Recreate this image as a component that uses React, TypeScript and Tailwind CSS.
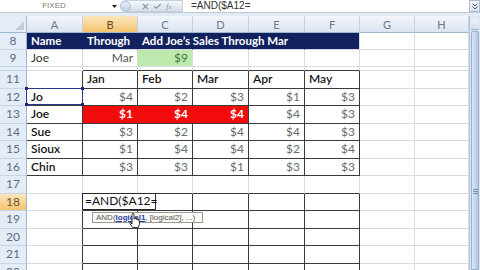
import React from 'react';
import { X, Check } from 'lucide-react';

type Cell = { t?: string; c?: string; r?: string; b?: string; x?: React.ReactNode };
type Row = { label: string; h: string; cells: Cell[]; hl?: boolean };

const WCLS = ['w-[56px]', 'w-[55px]', 'w-[55px]', 'w-[56px]', 'w-[56px]', 'w-[55px]', 'w-[55px]', 'w-[54px]'];
const LETTERS = ['A', 'B', 'C', 'D', 'E', 'F', 'G', 'H'];

const navy = 'bg-[#10215e] text-white font-bold text-[11.5px]';
const navyR = 'border-r-[#10215e]';
const val = 'justify-end text-[#6b6b6b]';
const label = 'text-[#151515] font-semibold';
const red = 'justify-end bg-[#f20c0c] text-white font-bold';
const DR = 'border-r-[#3a3a3a]';
const DB = 'border-b-[#3a3a3a]';

const months = ['Jan', 'Feb', 'Mar', 'Apr', 'May'];
const sales: [string, number[]][] = [
  ['Jo', [4, 2, 3, 1, 3]],
  ['Joe', [1, 4, 4, 4, 3]],
  ['Sue', [3, 2, 4, 4, 3]],
  ['Sioux', [1, 4, 4, 2, 4]],
  ['Chin', [3, 3, 1, 3, 3]],
];

const Selection = () => (
  <div className="absolute -top-px -left-px -right-px bottom-0 border border-[#2b3790] pointer-events-none">
    <div className="absolute -top-[2px] -left-[2px] w-[3px] h-[3px] bg-[#1c2670]" />
    <div className="absolute -top-[2px] -right-[2px] w-[3px] h-[3px] bg-[#1c2670]" />
    <div className="absolute -bottom-[2px] -right-[2px] w-[3px] h-[3px] bg-[#1c2670]" />
    <div className="absolute -bottom-[2px] -left-[2px] w-[3px] h-[3px] bg-[#1c2670]" />
  </div>
);

const EditBox = () => (
  <div className="absolute -top-px -left-px w-[74px] bottom-0 border border-[#2a2a2a] bg-white flex items-center pl-[2px] text-[12px] text-[#111]">
    =AND($A12=
  </div>
);

const Tooltip = () => (
  <>
    <div className="absolute top-[1px] left-[9px] w-[111px] h-[11px] border border-[#9a9a9a] bg-[#fbfbf6] flex items-center pl-[3px] text-[8px] text-[#555] font-['Liberation_Sans',sans-serif] whitespace-nowrap">
      AND(<span className="font-bold text-[#2a3a9a] underline">logical1</span>, [logical2], ...)
    </div>
    <svg className="absolute top-[2px] left-[46px]" width="11" height="15" viewBox="0 0 11 15">
      <path
        d="M3 1.2 Q3 0.5 4 0.5 Q5 0.5 5 1.2 V6 H5.6 V5.6 Q6.6 5 7.4 5.6 V6.4 Q8.2 5.9 9 6.4 V7.2 Q9.8 6.9 10.4 7.5 V11 L9.4 14.4 H3.6 L0.9 10.6 Q0.6 9.6 1.6 9.6 L3 11 Z"
        fill="white"
        stroke="black"
        strokeWidth="0.8"
      />
    </svg>
  </>
);

const boxRow = (n: string, extraB?: React.ReactNode): Row => ({
  label: n,
  h: 'h-[17.5px]',
  hl: n === '18',
  cells: [
    { r: DR },
    { r: DR, b: DB, x: extraB },
    { r: DR, b: DB },
    { r: DR, b: DB },
    { r: DR, b: DB },
    { r: DR, b: DB },
    {},
    {},
  ],
});

const rows: Row[] = [
  {
    label: '8',
    h: 'h-[17px]',
    cells: [
      { t: 'Name', c: navy, r: navyR },
      { t: 'Through', c: navy, r: navyR },
      { x: <span className="relative z-10">Add Joe&rsquo;s Sales Through Mar</span>, c: navy, r: navyR },
      { c: navy, r: navyR },
      { c: navy, r: navyR },
      { c: navy },
      {},
      {},
    ],
  },
  {
    label: '9',
    h: 'h-[17px]',
    cells: [
      { t: 'Joe', c: 'text-[#333]' },
      { t: 'Mar', c: 'justify-end text-[#555]' },
      { t: '$9', c: 'justify-end bg-[#bfe8ae] text-[#3f7a2f]' },
      {},
      {},
      {},
      {},
      {},
    ],
  },
  {
    label: '',
    h: 'h-[4px]',
    cells: [{}, { b: DB }, { b: DB }, { b: DB }, { b: DB }, { b: DB }, {}, {}],
  },
  {
    label: '11',
    h: 'h-[17.5px]',
    cells: [{ r: DR, b: DB }, ...months.map((m) => ({ t: m, c: label, r: DR, b: DB })), {}, {}],
  },
  ...sales.map(([n, vals]): Row => ({
    label: String(12 + sales.findIndex((s) => s[0] === n)),
    h: 'h-[17.5px]',
    cells: [
      { t: n, c: label + ' relative', r: DR, b: DB, x: n === 'Jo' ? <Selection /> : null },
      ...vals.map((v, i) => {
        const hot = n === 'Joe' && i < 3;
        return { t: '$' + v, c: hot ? red : val, r: hot && i < 2 ? 'border-r-[#f20c0c]' : DR, b: DB };
      }),
      {},
      {},
    ],
  })),
  {
    label: '17',
    h: 'h-[17.5px]',
    cells: [{}, { b: DB }, { b: DB }, { b: DB }, { b: DB }, { b: DB }, {}, {}],
  },
  boxRow('18', <EditBox />),
  boxRow('19', <Tooltip />),
  boxRow('20'),
  boxRow('21'),
  boxRow('22'),
];

const ColHeader = ({ l, i }: { l: string; i: number }) => (
  <div
    className={`${WCLS[i]} shrink-0 flex items-center justify-center border-r border-b border-r-[#c5d2e3] border-b-[#9eb6ce] bg-linear-to-b text-[11px] ${
      l === 'B' ? 'from-[#fbe6bb] to-[#f4c56c] text-[#5a4a2a]' : 'from-[#f2f6fb] to-[#dbe4f1] text-[#6a7890]'
    }`}
  >
    {l}
  </div>
);

export default function App() {
  return (
    <div className="w-[480px] h-[270px] overflow-hidden bg-white font-[Lato,sans-serif] text-[12px] leading-none select-none">
      {/* formula bar */}
      <div className="flex h-[13px] border-b border-[#bcc8d8] bg-white">
        <div className="w-[108px] flex items-center justify-center text-[8px] text-[#7a7a7a] font-['Liberation_Sans',sans-serif]">
          FIXED
        </div>
        <div className="w-[12px] flex items-center justify-center">
          <svg width="5" height="3" viewBox="0 0 5 3">
            <path d="M0 0 H5 L2.5 3 Z" fill="#222" />
          </svg>
        </div>
        <div className="w-[63px] h-[12px] flex items-center rounded-l-full bg-linear-to-b from-[#f4f7fb] to-[#d5deea] border border-[#c6d0dd]">
          <div className="w-[11px] h-[11px] -ml-px rounded-full bg-linear-to-b from-[#e9f0f9] to-[#bccde3] border border-[#b1c2d8]" />
          <X size={9} strokeWidth={3} className="ml-[10px] text-[#8d96a4]" />
          <Check size={9} strokeWidth={3} className="ml-[3px] text-[#8d96a4]" />
          <span className="ml-[4px] italic text-[9px] text-[#8d96a4] font-['Liberation_Serif',serif]">f<span className="text-[7px]">x</span></span>
        </div>
        <div className="flex-1 flex items-center pl-[8px] text-[10px] text-[#333] font-['Liberation_Sans',sans-serif]">
          =AND($A12=
        </div>
        <div className="w-[11px] flex items-center justify-center border border-[#aebcd0] bg-linear-to-b from-[#f1f5fa] to-[#d9e2ee]">
          <svg width="6" height="7" viewBox="0 0 6 7">
            <path d="M0.5 0.5 L3 3 L5.5 0.5 M0.5 3.5 L3 6 L5.5 3.5" stroke="#4a5568" strokeWidth="1" fill="none" />
          </svg>
        </div>
      </div>
      <div className="h-[3px] bg-[#e3ebf5]" />

      <div className="flex">
        {/* sheet */}
        <div className="flex flex-col w-[469px]">
          <div className="flex h-[17px]">
            <div className="w-[27px] shrink-0 border-r border-b border-r-[#9eb6ce] border-b-[#9eb6ce] bg-[#e6edf7] flex items-end justify-end p-[2px]">
              <svg width="9" height="9" viewBox="0 0 9 9">
                <path d="M9 0 V9 H0 Z" fill="#c3cedc" />
              </svg>
            </div>
            {LETTERS.map((l, i) => (
              <ColHeader key={l} l={l} i={i} />
            ))}
          </div>

          {rows.map((row, ri) => (
            <div key={ri} className={`flex ${row.h}`}>
              <div
                className={`w-[27px] shrink-0 flex items-center justify-center border-r border-b border-r-[#9eb6ce] border-b-[#c9d5e5] text-[12px] ${
                  row.hl ? 'bg-linear-to-b from-[#fbe6bb] to-[#f4c56c] text-[#6a5330]' : 'bg-[#e4ecf7] text-[#5c6c86]'
                }`}
              >
                {row.label}
              </div>
              {row.cells.map((cell, ci) => (
                <div
                  key={ci}
                  className={`${WCLS[ci]} shrink-0 flex items-center px-[4px] whitespace-nowrap border-r border-b ${
                    cell.r ?? 'border-r-[#d8dce2]'
                  } ${cell.b ?? 'border-b-[#d8dce2]'} ${cell.x ? 'relative' : ''} ${cell.c ?? ''}`}
                >
                  {cell.t}
                  {cell.x}
                </div>
              ))}
            </div>
          ))}
        </div>

        {/* vertical scrollbar */}
        <div className="w-[11px] h-[254px] flex flex-col bg-[#dde7f4] border-l border-[#b3c3d8]">
          <div className="h-[11px] mt-[3px] mx-px border-b border-[#9fb3cc] bg-linear-to-b from-[#eef3f9] to-[#d3deec]" />
          <div className="flex-1 mx-px mt-px rounded-t-[2px] border border-[#9bb0cb] bg-linear-to-r from-[#dbe6f4] via-[#c8d8ee] to-[#b4c8e3] flex flex-col items-center">
            <div className="h-[157px]" />
            <div className="w-[5px] h-px bg-[#7d92b0]" />
            <div className="w-[5px] h-px bg-[#7d92b0] mt-px" />
            <div className="w-[5px] h-px bg-[#7d92b0] mt-px" />
          </div>
        </div>
      </div>
    </div>
  );
}
